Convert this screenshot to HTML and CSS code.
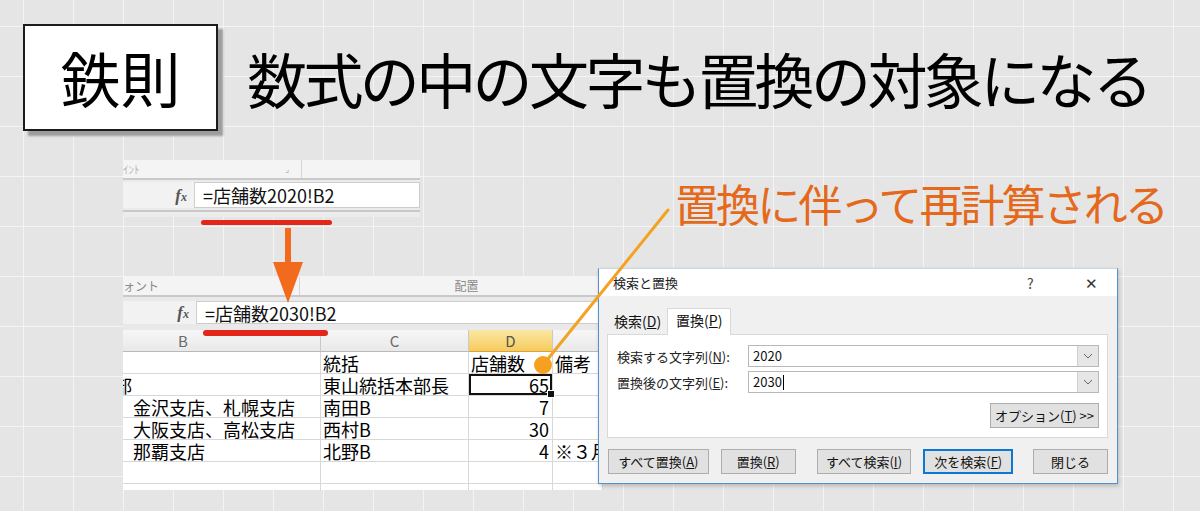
FILE: index.html
```html
<!DOCTYPE html>
<html lang="ja">
<head>
<meta charset="utf-8">
<title>鉄則 数式の中の文字も置換の対象になる</title>
<link rel="stylesheet" href="styles.css">
</head>
<body>
<div class="slide">
  <header class="title-row">
    <div class="badge">鉄則</div>
    <h1 class="title">数式の中の文字も置換の対象になる</h1>
  </header>

  <main class="stage">
    <section class="xl xl-top">
      <div class="ribbon">
        <div class="grp grp-top"><span class="grp-name">ｲﾝﾄ</span><span class="launcher">⌟</span></div>
        <div class="grp grp-rest"></div>
      </div>
      <div class="fbar fbar-top">
        <div class="fx-area"><span class="fx">f<span class="fx-x">x</span></span></div>
        <div class="finput">=店舗数2020!B2</div>
      </div>
    </section>
    <div class="uline uline-top"></div>

    <section class="xl xl-main">
      <div class="ribbon">
        <div class="grp grp-font"><span class="grp-name">ォント</span></div>
        <div class="grp grp-align"><span class="grp-name">配置</span></div>
      </div>
      <div class="fbar fbar-main">
        <div class="fx-area"><span class="fx">f<span class="fx-x">x</span></span></div>
        <div class="finput">=店舗数2030!B2</div>
      </div>
      <div class="sheet">
        <div class="row hdr">
          <div class="c h hb">B</div><div class="c h">C</div><div class="c h hd">D</div><div class="c h"></div>
        </div>
        <div class="row">
          <div class="c"></div><div class="c">統括</div><div class="c">店舗数</div><div class="c">備考</div>
        </div>
        <div class="row">
          <div class="c cut"><span class="cut-text">部</span></div><div class="c">東山統括本部長</div><div class="c num active">65</div><div class="c"></div>
        </div>
        <div class="row">
          <div class="c ind">金沢支店、札幌支店</div><div class="c">南田B</div><div class="c num">7</div><div class="c"></div>
        </div>
        <div class="row">
          <div class="c ind">大阪支店、高松支店</div><div class="c">西村B</div><div class="c num">30</div><div class="c"></div>
        </div>
        <div class="row">
          <div class="c ind">那覇支店</div><div class="c">北野B</div><div class="c num">4</div><div class="c">※３月</div>
        </div>
        <div class="row">
          <div class="c"></div><div class="c"></div><div class="c"></div><div class="c"></div>
        </div>
        <div class="row row-last">
          <div class="c"></div><div class="c"></div><div class="c"></div><div class="c"></div>
        </div>
      </div>
    </section>
  </main>

  <div class="uline uline-main"></div>

  <svg class="down-arrow" width="32" height="76" viewBox="0 0 32 76" aria-hidden="true">
    <rect x="13" y="0" width="6" height="38" fill="#f26a1d"/>
    <polygon points="1,34 31,34 16,75" fill="#f26a1d"/>
  </svg>

  <p class="callout">置換に伴って再計算される</p>

  <div class="dialog">
    <div class="dlg-title">
      <span class="dlg-name">検索と置換</span>
      <span class="dlg-help">?</span>
      <span class="dlg-close">✕</span>
    </div>
    <div class="dlg-body">
      <div class="tabs">
        <div class="tab">検索(<u>D</u>)</div>
        <div class="tab tab-on">置換(<u>P</u>)</div>
      </div>
      <div class="panel">
        <div class="field">
          <label class="lbl">検索する文字列(<u>N</u>):</label>
          <div class="combo"><span class="combo-text">2020</span><span class="drop"><svg width="10" height="6" viewBox="0 0 10 6"><polyline points="1,1 5,5 9,1" fill="none" stroke="#666" stroke-width="1"/></svg></span></div>
        </div>
        <div class="field">
          <label class="lbl">置換後の文字列(<u>E</u>):</label>
          <div class="combo"><span class="combo-text">2030<span class="caret"></span></span><span class="drop"><svg width="10" height="6" viewBox="0 0 10 6"><polyline points="1,1 5,5 9,1" fill="none" stroke="#666" stroke-width="1"/></svg></span></div>
        </div>
        <div class="opt-row">
          <div class="btn btn-opt">オプション(<u>T</u>) &gt;&gt;</div>
        </div>
      </div>
      <div class="btn-row">
        <div class="btn b1">すべて置換(<u>A</u>)</div>
        <div class="btn b2">置換(<u>R</u>)</div>
        <div class="btn b3">すべて検索(<u>I</u>)</div>
        <div class="btn b4 btn-default">次を検索(<u>F</u>)</div>
        <div class="btn b5">閉じる</div>
      </div>
    </div>
  </div>

  <svg class="pointer" width="1200" height="511" viewBox="0 0 1200 511" aria-hidden="true">
    <line x1="543" y1="365" x2="668" y2="210" stroke="#f3a223" stroke-width="3" stroke-linecap="round"/>
    <circle cx="543" cy="365" r="9" fill="#f5a11f"/>
  </svg>
</div>
</body>
</html>
```

FILE: styles.css
```css
* { box-sizing: border-box; }

html, body { margin: 0; padding: 0; }

body {
  width: 1200px;
  height: 511px;
  overflow: hidden;
  background-color: #e5e5e5;
  background-image:
    linear-gradient(to right, #f4f4f4 1px, transparent 1px),
    linear-gradient(to bottom, #f4f4f4 1px, transparent 1px);
  background-size: 50px 50px;
  background-position: 23px 26px;
  font-family: "Noto Sans CJK JP", "Noto Sans", sans-serif;
  color: #000;
}

.slide {
  position: relative;
  width: 1200px;
  height: 511px;
  padding: 24px 0 0 23px;
}

/* ---------- title ---------- */
.title-row {
  display: flex;
  align-items: center;
  height: 107px;
}

.badge {
  width: 195px;
  height: 107px;
  border: 2px solid #1c1c1c;
  background: #fff;
  box-shadow: 5px 5px 2px #9d9d9d;
  display: flex;
  align-items: center;
  justify-content: center;
  font-size: 60px;
  line-height: 1;
  padding-bottom: 2px;
}

.title {
  margin: 0 0 0 29px;
  font-size: 60px;
  font-weight: 400;
  letter-spacing: -3.6px;
  line-height: 1;
  white-space: nowrap;
}

/* ---------- excel pieces ---------- */
.stage {
  margin: 29px 0 0 100px;
}

.xl-top { width: 297px; }
.xl-main { width: 480px; margin-top: 52px; }

.ribbon {
  display: flex;
  height: 18px;
  background: #f4f4f4;
  font-size: 11px;
  line-height: 18px;
  color: #9a9a9a;
}

.grp {
  height: 18px;
}

.grp-top {
  width: 179px;
  border-right: 1px solid #d6d6d6;
  display: flex;
  justify-content: space-between;
}
.grp-top .grp-name { color: #b5b5b5; }
.launcher { margin-right: 12px; font-size: 9px; color: #b0b0b0; }
.grp-rest { flex: 1; }

.grp-font {
  width: 177px;
  border-right: 1px solid #d6d6d6;
}
.grp-font .grp-name { font-size: 12px; color: #8a8a8a; }
.grp-align {
  flex: 1;
  text-align: center;
  padding-left: 30px;
}
.grp-align .grp-name { font-size: 12px; color: #8a8a8a; }

.fbar {
  display: flex;
  align-items: flex-start;
  background: #ebebeb;
  border-top: 2px solid #c9c9c9;
}

.fbar-top {
  height: 39px;
  padding-top: 2px;
  box-shadow: inset 0 -5px 0 #ececec, inset 0 -7px 0 #c9c9c9;
}
.fbar-main {
  height: 35px;
  padding-top: 4px;
  background: #e9e9e9;
}

.fx-area {
  width: 72px;
  height: 26px;
  display: flex;
  align-items: center;
  justify-content: flex-end;
  padding-right: 7px;
  border-right: 1px solid #cfcfcf;
  background: #f2f2f2;
}
.fbar-main .fx-area { width: 74px; height: 23px; }

.fx {
  font-family: "Liberation Serif", serif;
  font-style: italic;
  font-weight: bold;
  font-size: 17px;
  color: #555;
  line-height: 1;
}
.fx-x { font-size: 12px; }

.finput {
  flex: 1;
  height: 26px;
  background: #fff;
  border: 1px solid #cdcdcd;
  border-left: none;
  font-size: 18px;
  line-height: 24px;
  padding-left: 8px;
  white-space: nowrap;
  color: #111;
}
.fbar-main .finput { height: 23px; line-height: 22px; padding-left: 8px; }

.uline {
  height: 5px;
  background: #e2261a;
  border-radius: 3px;
}
.uline-top {
  width: 131px;
  margin: 3px 0 0 78px;
}
.uline-main {
  position: absolute;
  left: 203px;
  top: 330px;
  width: 125px;
  height: 6px;
}

/* sheet grid */
.sheet {
  height: 160px;
  overflow: hidden;
  background: #fff;
}

.row {
  display: grid;
  grid-template-columns: 198px 148px 84px 1fr;
  height: 22px;
}

.c {
  border-right: 1px solid #d8d8d8;
  border-bottom: 1px solid #d8d8d8;
  font-size: 18px;
  line-height: 20px;
  padding: 1px 0 0 2px;
  white-space: nowrap;
  display: flex;
  align-items: flex-end;
}

.hdr { height: 22px; }
.h {
  background: linear-gradient(#f6f6f6, #e9e9e9);
  border-right-color: #c9c9c9;
  border-bottom-color: #b9b9b9;
  justify-content: center;
  align-items: center;
  font-size: 15px;
  line-height: 20px;
  color: #6a6a6a;
  padding: 0;
}
.hb { justify-content: flex-start; padding-left: 55px; }
.hd {
  background: linear-gradient(#fbe7a3, #f6cb5d);
  border-bottom-color: #d9a23a;
  color: #555;
}

.c.cut { padding-left: 0; overflow: hidden; }
.cut-text { margin-left: -9px; }
.ind { padding-left: 10px; }
.num { justify-content: flex-end; padding-right: 3px; }

.row-last .c { border-bottom: none; }

.active {
  position: relative;
  box-shadow: inset 0 0 0 2px #111;
}
.active::after {
  content: "";
  position: absolute;
  right: -3px;
  bottom: -3px;
  width: 6px;
  height: 6px;
  background: #111;
  border: 1px solid #fff;
}

/* ---------- overlays ---------- */
.down-arrow {
  position: absolute;
  left: 272px;
  top: 228px;
}

.callout {
  position: absolute;
  left: 675px;
  top: 181px;
  margin: 0;
  font-size: 44px;
  letter-spacing: -2.9px;
  line-height: 1;
  color: #e4691c;
  white-space: nowrap;
}

.pointer {
  position: absolute;
  left: 0;
  top: 0;
  pointer-events: none;
}

/* ---------- dialog ---------- */
.dialog {
  position: absolute;
  left: 598px;
  top: 268px;
  width: 520px;
  height: 216px;
  background: #f0f0f0;
  border: 1px solid #5590c8;
  border-top-color: #c9d6e3;
  box-shadow: 1px 2px 4px rgba(0, 0, 0, 0.2);
  font-size: 13px;
  color: #111;
}

.dlg-title {
  display: flex;
  align-items: center;
  height: 27px;
  background: #fff;
  padding-left: 14px;
}
.dlg-name { flex: 1; color: #222; }
.dlg-help { width: 58px; color: #444; font-size: 14px; }
.dlg-close { width: 32px; color: #333; font-size: 15px; }

.dlg-body { padding: 12px 9px 0 8px; }

.tabs {
  display: flex;
  align-items: flex-end;
  height: 26px;
}
.tab {
  height: 24px;
  padding: 0 6px 0 7px;
  line-height: 23px;
  font-size: 14px;
}
.tab-on {
  height: 27px;
  background: #fff;
  border: 1px solid #d9d9d9;
  border-bottom: none;
  padding: 0 8px;
  margin-bottom: -1px;
  position: relative;
}

.panel {
  height: 104px;
  background: #fff;
  border: 1px solid #d9d9d9;
  padding: 10px 8px 0 9px;
  display: flex;
  flex-direction: column;
  gap: 4px;
}

.field {
  display: flex;
  align-items: center;
  height: 22px;
}
.lbl {
  width: 131px;
  font-size: 13px;
  color: #222;
  white-space: nowrap;
}
.combo {
  flex: 1;
  height: 22px;
  display: flex;
  border: 1px solid #b8b8b8;
  background: #fff;
}
.combo-text {
  flex: 1;
  padding-left: 4px;
  line-height: 20px;
  font-size: 13px;
  display: flex;
  align-items: center;
}
.caret {
  display: inline-block;
  width: 1px;
  height: 15px;
  background: #000;
  margin-left: 1px;
}
.drop {
  width: 21px;
  background: #e6e6e6;
  border-left: 1px solid #cfcfcf;
  display: flex;
  align-items: center;
  justify-content: center;
}

.opt-row {
  display: flex;
  justify-content: flex-end;
  margin-top: 6px;
}

.btn {
  height: 25px;
  background: #e1e1e1;
  border: 1px solid #adadad;
  display: flex;
  align-items: center;
  justify-content: center;
  font-size: 13px;
  white-space: nowrap;
  color: #111;
}
.btn-opt { width: 109px; }

.btn-row {
  display: flex;
  margin-top: 11px;
}
.b1 { width: 101px; margin-left: 1px; }
.b2 { width: 75px; margin-left: 12px; }
.b3 { width: 95px; margin-left: 21px; }
.b4 { width: 90px; margin-left: 12px; }
.b5 { width: 75px; margin-left: 20px; }
.btn-default { border: 2px solid #0a78d4; }
```
